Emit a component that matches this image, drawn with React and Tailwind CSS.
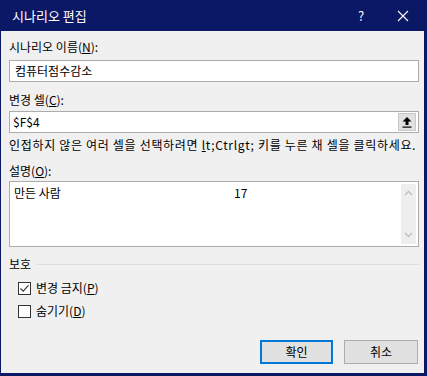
import React from 'react';

const FONT = { fontFamily: '"Noto Sans CJK KR", "Noto Sans", sans-serif' };

function Check({ checked, children }) {
  return (
    <div className="flex items-center h-4 pl-[9px]">
      <div className="w-[13px] h-[13px] border border-[#333333] bg-white flex items-center justify-center">
        {checked && (
          <svg width="11" height="11" viewBox="0 0 11 11">
            <path d="M1.5 5.5 L4.2 8.2 L9.5 2.3" fill="none" stroke="#333" strokeWidth="1.1" />
          </svg>
        )}
      </div>
      <span className="ml-[5px]">{children}</span>
    </div>
  );
}

export default function App() {
  return (
    <div style={FONT} className="w-[427px] h-[376px] bg-[#f0f0f0] border-l border-r-[3px] border-b-[3px] border-[#0b1866] flex flex-col text-[12px] leading-4 text-black overflow-hidden">
      {/* title bar */}
      <div className="h-[31px] shrink-0 bg-[#0b1866] text-white flex items-center pl-[11px] text-[13px]">
        <span className="flex-1">시나리오 편집</span>
        <span className="w-[20px] text-center mr-[26px] text-[13px]">?</span>
        <svg width="12" height="12" viewBox="0 0 12 12" className="mr-[15px]">
          <path d="M1 1 L11 11 M11 1 L1 11" stroke="white" strokeWidth="1.1" />
        </svg>
      </div>

      <div className="flex flex-col px-[8px] pt-[8px]">
        <div>시나리오 이름(<u>N</u>):</div>
        <div className="mt-[5px] h-[22px] w-[410px] border border-[#adadad] bg-white flex items-center pl-[5px]">
          컴퓨터점수감소
        </div>

        <div className="mt-[10px]">변경 셀(<u>C</u>):</div>
        <div className="mt-[3px] h-[22px] w-[410px] border border-[#adadad] bg-white flex items-center pl-[3px] pr-[2px]">
          <span className="flex-1">$F$4</span>
          <div className="w-[18px] h-[18px] bg-[#e1e1e1] border border-[#c8c8c8] flex items-center justify-center">
            <svg width="10" height="12" viewBox="0 0 10 12">
              <path d="M5 1 L9.5 5.5 L6.5 5.5 L6.5 9 L3.5 9 L3.5 5.5 L0.5 5.5 Z" fill="#000" />
              <rect x="0.5" y="10.5" width="9" height="1.2" fill="#000" />
            </svg>
          </div>
        </div>

        <div className="mt-[4px] whitespace-nowrap tracking-[0.68px]">
          인접하지 않은 여러 셀을 선택하려면 <u>l</u>t;Ctrlgt; 키를 누른 채 셀을 클릭하세요.
        </div>

        <div className="mt-[10px]">설명(<u>O</u>):</div>
        <div className="mt-[2px] h-[66px] w-[410px] border border-[#adadad] bg-white flex">
          <div className="flex-1 pl-[4px] pt-[3px] flex">
            <span className="w-[220px]">만든 사람</span>
            <span>17</span>
          </div>
          <div className="w-[15px] my-[2px] mr-[2px] bg-[#eeeeee] flex flex-col justify-between items-center py-[6px]">
            <svg width="9" height="6" viewBox="0 0 9 6">
              <path d="M1 5 L4.5 1.5 L8 5" fill="none" stroke="#bdbdbd" strokeWidth="1.3" />
            </svg>
            <svg width="9" height="6" viewBox="0 0 9 6">
              <path d="M1 1 L4.5 4.5 L8 1" fill="none" stroke="#bdbdbd" strokeWidth="1.3" />
            </svg>
          </div>
        </div>

        <div className="mt-[9px] w-[410px] flex items-center">
          <span>보호</span>
          <div className="flex-1 h-px bg-[#dcdcdc] ml-[6px]" />
        </div>

        <div className="mt-[8px]">
          <Check checked>변경 금지(<u>P</u>)</Check>
        </div>
        <div className="mt-[7px]">
          <Check>숨기기(<u>D</u>)</Check>
        </div>

        <div className="mt-[21px] w-[410px] flex justify-end gap-[11px] pr-[1px]">
          <div className="w-[73px] h-[24px] border-2 border-[#0078d7] bg-[#e1e1e1] flex items-center justify-center">확인</div>
          <div className="w-[74px] h-[24px] border border-[#adadad] bg-[#e1e1e1] flex items-center justify-center">취소</div>
        </div>
      </div>
    </div>
  );
}
